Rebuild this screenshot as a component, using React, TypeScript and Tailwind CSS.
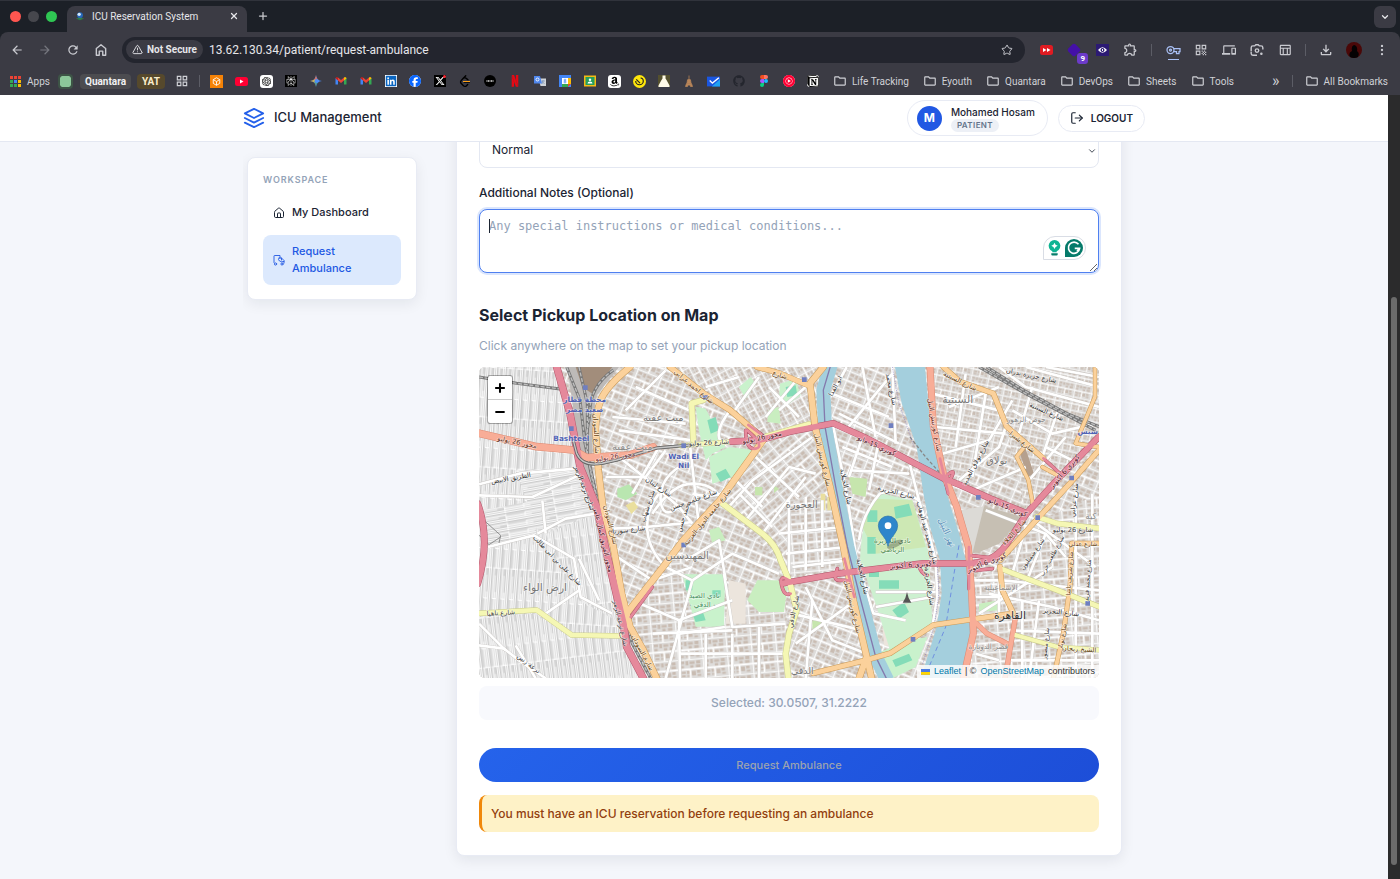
import type { ReactNode } from "react";
import {
  ChevronDown,
  EllipsisVertical,
  House,
  LogOut,
  Plus,
  Star,
  TriangleAlert,
  X,
} from "lucide-react";
import {
  FaAmazon,
  FaFacebook,
  FaGithub,
  FaLinkedin,
  FaXTwitter,
  FaYoutube,
} from "react-icons/fa6";
import { FiLayers } from "react-icons/fi";
import {
  MdArrowBack,
  MdArrowForward,
  MdOutlineDevices,
  MdOutlineExtension,
  MdOutlineFileDownload,
  MdOutlineFolder,
  MdOutlineGridView,
  MdOutlineTableChart,
  MdQrCode,
  MdRefresh,
} from "react-icons/md";
import { RiOpenaiFill } from "react-icons/ri";
import {
  SiLeetcode,
  SiNetflix,
  SiNotion,
  SiPerplexity,
  SiYoutubemusic,
} from "react-icons/si";

function Gmail() {
  return (
    <svg viewBox="0 0 24 24" className="h-3 w-3">
      <path d="M1 6v13h5V9z" fill="#4285f4" />
      <path d="M23 6v13h-5V9z" fill="#34a853" />
      <path d="M6 5l6 5 6-5v6l-6 5-6-5z" fill="#ea4335" />
      <path d="M18 5l2-1q3 0 3 3l-5 4z" fill="#fbbc04" />
      <path d="M6 5L4 4Q1 4 1 7l5 4z" fill="#c5221f" />
    </svg>
  );
}

function Figma() {
  return (
    <svg viewBox="0 0 24 24" className="h-3 w-3">
      <path d="M12 0H8a4 4 0 0 0 0 8h4z" fill="#f24e1e" />
      <path d="M12 0h4a4 4 0 0 1 0 8h-4z" fill="#ff7262" />
      <path d="M12 8H8a4 4 0 0 0 0 8h4z" fill="#a259ff" />
      <circle cx="16" cy="12" r="4" fill="#1abcfe" />
      <path d="M12 16H8a4 4 0 1 0 4 4z" fill="#0acf83" />
    </svg>
  );
}

const favicons: { name: string; icon: ReactNode }[] = [
  {
    name: "Sandbox",
    icon: (
      <svg viewBox="0 0 24 24" className="h-[13px] w-[13px] bg-[#f58206]">
        <path
          d="M12 5l6 3.500v7L12 19l-6-3.500v-7zM6 8.500l6 3.500 6-3.500M12 12v7"
          fill="none"
          stroke="#fff"
          strokeWidth="1.600"
        />
      </svg>
    ),
  },
  {
    name: "YouTube",
    icon: (
      <svg viewBox="0 0 26 18" className="h-[9px] w-[13px]">
        <rect width="26" height="18" rx="5" fill="#ff0033" />
        <path d="M10 5l7 4-7 4z" fill="#fff" />
      </svg>
    ),
  },
  {
    name: "ChatGPT",
    icon: (
      <span className="rounded-[3px] bg-white p-px">
        <RiOpenaiFill className="h-[11px] w-[11px] text-black" />
      </span>
    ),
  },
  {
    name: "Perplexity",
    icon: (
      <span className="bg-black p-px">
        <SiPerplexity className="h-[10px] w-[10px] text-white" />
      </span>
    ),
  },
  {
    name: "Gemini",
    icon: (
      <svg viewBox="0 0 24 24" className="h-3 w-3">
        <path d="M12 0q1 11 12 12Q13 13 12 24z" fill="#4c8df6" />
        <path d="M12 0q-1 11-12 12 11 1 12 12z" fill="#8a9bb0" />
        <path d="M12 0q-.5 8-5 10h10Q12.500 8 12 0z" fill="#e5695b" />
        <path d="M0 12q9-1 11-4v8q-2-3-11-4z" fill="#e0b93a" />
        <path d="M12 24q-.5-8-4-11h8q-3.500 3-4 11z" fill="#4ea36b" />
        <circle cx="13" cy="12" r="4" fill="#4c8df6" />
      </svg>
    ),
  },
  { name: "Gmail", icon: <Gmail /> },
  { name: "Gmail work", icon: <Gmail /> },
  {
    name: "LinkedIn",
    icon: (
      <span className="bg-white">
        <FaLinkedin className="h-3 w-3 text-[#0a66c2]" />
      </span>
    ),
  },
  {
    name: "Facebook",
    icon: (
      <span className="rounded-full bg-white">
        <FaFacebook className="h-3 w-3 text-[#0866ff]" />
      </span>
    ),
  },
  {
    name: "X",
    icon: (
      <span className="relative bg-black p-px">
        <FaXTwitter className="h-[10px] w-[10px] text-white" />
        <i className="absolute top-0 right-0 h-[3px] w-[3px] rounded-full bg-red-500" />
      </span>
    ),
  },
  {
    name: "LeetCode",
    icon: (
      <span className="relative">
        <SiLeetcode className="h-3 w-3 text-black" />
        <i className="absolute top-[6px] left-[4px] h-px w-[7px] bg-[#ffa116]" />
      </span>
    ),
  },
  {
    name: "Chatbox",
    icon: (
      <svg viewBox="0 0 24 24" className="h-3 w-3">
        <circle cx="12" cy="12" r="12" fill="#000" />
        <path d="M5 12h14" stroke="#ddd" strokeWidth="3" strokeDasharray="2 1" />
      </svg>
    ),
  },
  { name: "Netflix", icon: <SiNetflix className="h-3 w-3 text-[#e50914]" /> },
  {
    name: "Translate",
    icon: (
      <svg viewBox="0 0 24 24" className="h-3 w-3">
        <path d="M9 7h15v15H13z" fill="#cfd3d8" />
        <path d="M0 2h12l4 15H0z" fill="#4f86ec" />
        <circle cx="7" cy="9" r="3" fill="none" stroke="#fff" strokeWidth="1.800" />
        <path d="M15 12h7M18 10v2l-2 6M17 13l4 5" stroke="#5b7aa8" fill="none" />
      </svg>
    ),
  },
  {
    name: "Calendar",
    icon: (
      <svg viewBox="0 0 24 24" className="h-3 w-3">
        <path d="M0 0h24v24H0z" fill="#4285f4" />
        <path d="M18 6h6v12h-6z" fill="#fbbc04" />
        <path d="M6 18h12v6H6z" fill="#34a853" />
        <path d="M18 18h6l-6 6z" fill="#ea4335" />
        <path d="M6 6h12v12H6z" fill="#fff" />
        <circle cx="12" cy="10" r="1.800" fill="none" stroke="#4285f4" strokeWidth="1.500" />
        <circle cx="12" cy="14" r="2" fill="none" stroke="#4285f4" strokeWidth="1.500" />
      </svg>
    ),
  },
  {
    name: "Classroom",
    icon: (
      <svg viewBox="0 0 24 24" className="h-3 w-3">
        <path d="M0 1h24v22H0z" fill="#f5ba15" />
        <path d="M3 4h18v16H3z" fill="#249f5c" />
        <circle cx="12" cy="9.500" r="2.500" fill="#fff" />
        <path d="M7 17q0-4 5-4t5 4z" fill="#fff" />
      </svg>
    ),
  },
  {
    name: "Amazon",
    icon: (
      <span className="rounded-[3px] bg-white p-px">
        <FaAmazon className="h-[11px] w-[11px] text-black" />
      </span>
    ),
  },
  {
    name: "Basket",
    icon: (
      <svg viewBox="0 0 24 24" className="h-[13px] w-[13px]">
        <circle cx="12" cy="12" r="12" fill="#ffe70b" />
        <path
          d="M5 11a7 7 0 0 0 14 0c0-4-3-6-5-5M6 8l7 7"
          fill="none"
          stroke="#222"
          strokeWidth="2.200"
        />
      </svg>
    ),
  },
  {
    name: "Lab",
    icon: (
      <svg viewBox="0 0 24 24" className="h-3 w-3 bg-[#54502e]">
        <path d="M9 1h6v6l2 3 6 11v3H1v-3L7 10l2-3z" fill="#fffbe8" />
      </svg>
    ),
  },
  {
    name: "Tower",
    icon: (
      <svg viewBox="0 0 24 24" className="h-3 w-3">
        <path
          d="M12 1v8M9 9h6M9 10h6l1 6H8zM7 17L5 23h4l1-3h4l1 3h4l-2-6z"
          fill="#b98659"
          stroke="#b98659"
          strokeWidth="1.500"
        />
      </svg>
    ),
  },
  {
    name: "Whiteboard",
    icon: (
      <svg viewBox="0 0 24 24" className="h-[13px] w-[13px]">
        <path d="M0 3h24v18H0z" fill="#1a56e0" />
        <path d="M24 8v13H9z" fill="#1fa2f1" />
        <path d="M5 10l5 5L22 5" fill="none" stroke="#fff" strokeWidth="2.500" />
      </svg>
    ),
  },
  { name: "GitHub", icon: <FaGithub className="h-3 w-3 text-[#24262e]" /> },
  { name: "Figma", icon: <Figma /> },
  {
    name: "YouTube Music",
    icon: (
      <span className="rounded-full bg-white">
        <SiYoutubemusic className="h-3 w-3 text-[#ff0033]" />
      </span>
    ),
  },
  {
    name: "Notion",
    icon: (
      <span className="rounded-[3px] bg-white">
        <SiNotion className="h-3 w-3 text-black" />
      </span>
    ),
  },
];

const folders = ["Life Tracking", "Eyouth", "Quantara", "DevOps", "Sheets", "Tools"];

function ToolButton({ label, children }: { label: string; children: ReactNode }) {
  return (
    <button
      aria-label={label}
      className="relative flex h-7 w-7 shrink-0 items-center justify-center"
    >
      {children}
    </button>
  );
}

function TabStrip() {
  return (
    <div className="flex h-8 items-end border-t border-[#30333b] bg-[#1c2027] pl-2.5">
      <div className="flex h-full items-center gap-[7px]">
        <i className="h-[11px] w-[11px] rounded-full bg-[#ff5650]" />
        <i className="h-[11px] w-[11px] rounded-full bg-[#46474d]" />
        <i className="h-[11px] w-[11px] rounded-full bg-[#2fc653]" />
      </div>
      <div className="ml-2.5 flex h-[26px] w-[180px] items-center rounded-t-lg bg-[#3b3b44] px-2 pb-1.5 text-[10px] text-[#e6e6ea]">
        <svg viewBox="0 0 12 12" className="h-2.5 w-2.5">
          <path d="M1 9l5 2 5-2-5-1z" fill="#2f7d4a" />
          <circle cx="6" cy="5" r="3.500" fill="#2668b8" />
          <circle cx="5" cy="4" r="2" fill="#d5e8fa" />
        </svg>
        <span className="ml-[7px] flex-1">ICU Reservation System</span>
        <button aria-label="Close tab">
          <X className="h-2.5 w-2.5" strokeWidth={3} />
        </button>
      </div>
      <button aria-label="New tab" className="mb-2.5 ml-2.5 text-[#c8c9ce]">
        <Plus className="h-3 w-3" strokeWidth={2.5} />
      </button>
      <button
        aria-label="Search tabs"
        className="mr-1 mb-1 ml-auto flex h-[22px] w-[22px] items-center justify-center rounded-md bg-[#3b3b44] text-[#e6e6ea]"
      >
        <ChevronDown className="h-2.5 w-2.5" strokeWidth={3} />
      </button>
    </div>
  );
}

function Toolbar() {
  return (
    <div className="bg-[#1c2027]">
      <div className="flex h-[35px] items-center rounded-t-lg bg-[#3b3b44] pr-1 pl-[3px] text-[#c9cad0]">
        <ToolButton label="Back">
          <MdArrowBack className="h-3.5 w-3.5" />
        </ToolButton>
        <ToolButton label="Forward">
          <MdArrowForward className="h-3.5 w-3.5 text-[#76777f]" />
        </ToolButton>
        <ToolButton label="Reload">
          <MdRefresh className="h-3.5 w-3.5" />
        </ToolButton>
        <ToolButton label="Home">
          <svg
            viewBox="0 0 24 24"
            className="h-3.5 w-3.5"
            fill="none"
            stroke="currentColor"
            strokeWidth="2.400"
            strokeLinejoin="round"
          >
            <path d="M4 21V9.500L12 3l8 6.500V21h-5v-7H9v7z" />
          </svg>
        </ToolButton>
        <div className="mx-[7px] flex h-[26px] min-w-0 flex-1 items-center rounded-full bg-[#23252e] pr-3 pl-1">
          <span className="flex h-[19px] items-center gap-1 rounded-full bg-[#3b3b44] px-1.5 text-[10px] font-bold text-[#e6e6ea]">
            <TriangleAlert className="h-[11px] w-[11px]" />
            Not Secure
          </span>
          <input
            aria-label="Address"
            readOnly
            value="13.62.130.34/patient/request-ambulance"
            className="ml-1.5 min-w-0 flex-1 bg-transparent text-xs text-[#e6e6ea] outline-none"
          />
          <Star className="h-3 w-3" />
        </div>
        <ToolButton label="Playback speed">
          <svg viewBox="0 0 26 20" className="h-2.5 w-[13px]">
            <rect width="26" height="20" rx="5" fill="#e01b22" />
            <path d="M6 6l7 4-7 4zM14 6l7 4-7 4z" fill="#fff" />
          </svg>
        </ToolButton>
        <ToolButton label="Blocker, 9 items">
          <i className="h-2.5 w-2.5 rotate-45 rounded-[2px] bg-[#4410a8]" />
          <span className="absolute right-0 bottom-1 translate-y-1 rounded-[3px] bg-[#6c3bc9] px-[3px] text-[8px] leading-[11px] font-bold text-white">
            9
          </span>
        </ToolButton>
        <ToolButton label="Dark reader">
          <svg viewBox="0 0 26 24" className="h-3 w-[13px]">
            <path d="M0 0h26v24H0z" fill="#2c1a74" />
            <path d="M4 12q9-11 18 0-9 11-18 0z" fill="#fff" />
            <circle cx="13" cy="12" r="4" fill="#2c1a74" />
            <path d="M12 10h2v4h-2z" fill="#fff" />
          </svg>
        </ToolButton>
        <ToolButton label="Extensions">
          <MdOutlineExtension className="h-[15px] w-[15px]" />
        </ToolButton>
        <i className="mx-[7px] h-3 w-px bg-[#5c5d66]" />
        <ToolButton label="Passwords">
          <svg
            viewBox="0 0 30 20"
            className="h-2.5 w-[15px] text-[#a9c0f5]"
            fill="none"
            stroke="currentColor"
            strokeWidth="2.500"
          >
            <circle cx="9" cy="10" r="7" />
            <circle cx="9" cy="10" r="2" />
            <path d="M15 7h13v6h-2v4h-5v-4h-6" />
          </svg>
          <i className="absolute bottom-1 h-px w-[11px] bg-[#a9c0f5]" />
        </ToolButton>
        <ToolButton label="QR code">
          <MdQrCode className="h-3.5 w-3.5" />
        </ToolButton>
        <ToolButton label="Send to device">
          <MdOutlineDevices className="h-3.5 w-3.5" />
        </ToolButton>
        <ToolButton label="Search with lens">
          <svg
            viewBox="0 0 24 24"
            className="h-3.5 w-3.5"
            fill="none"
            stroke="currentColor"
            strokeWidth="2.400"
          >
            <path d="M2 14V8q0-3 3-3h3l2-2h4l2 2h3q3 0 3 3v3M2 15v3q0 3 3 3h7" />
            <circle cx="12" cy="13" r="3" />
            <circle cx="19.500" cy="18.500" r="1" fill="currentColor" />
          </svg>
        </ToolButton>
        <ToolButton label="Table view">
          <MdOutlineTableChart className="h-3.5 w-3.5" />
        </ToolButton>
        <i className="mx-1.5 h-3 w-px bg-[#5c5d66]" />
        <ToolButton label="Downloads">
          <MdOutlineFileDownload className="h-4 w-4" />
        </ToolButton>
        <ToolButton label="Profile">
          <svg viewBox="0 0 16 16" className="h-4 w-4">
            <circle cx="8" cy="8" r="8" fill="#4a0808" />
            <path d="M4 15q-2-4 2-6-1-5 2-6 4 1 3 6 3 2 1 6-4 2-8 0z" fill="#050203" />
          </svg>
        </ToolButton>
        <ToolButton label="Menu">
          <EllipsisVertical className="h-3.5 w-3.5" />
        </ToolButton>
      </div>
    </div>
  );
}

function BookmarkBar() {
  const dots = [
    "#ea4335", "#ea4335", "#ea4335",
    "#34a853", "#4285f4", "#fbbc04",
    "#34a853", "#34a853", "#fbbc04",
  ];
  return (
    <nav className="flex h-7 items-center bg-[#3b3b44] pr-3 pl-2.5 text-[10px] whitespace-nowrap text-[#d0d1d6]">
      <a href="#" className="flex w-[50px] items-center gap-1.5">
        <span className="grid grid-cols-3 gap-px">
          {dots.map((color, i) => (
            <i key={i} className="h-[3px] w-[3px]" style={{ background: color }} />
          ))}
        </span>
        Apps
      </a>
      <a href="#" aria-label="Green" className="h-[11px] w-[11px] rounded-[2px] bg-[#8cc79a] outline-2 outline-[#3d5446]" />
      <a href="#" className="ml-[9px] rounded bg-[#4c4c50] px-[5px] font-bold text-[#f1f1f3]">
        Quantara
      </a>
      <a href="#" className="ml-1.5 rounded bg-[#56492c] px-[5px] font-bold text-[#fbeecb]">
        YAT
      </a>
      <a href="#" aria-label="Board" className="ml-2.5">
        <MdOutlineGridView className="h-3.5 w-3.5" />
      </a>
      <i className="mr-1 ml-2.5 h-3 w-px bg-[#5c5d66]" />
      <div className="grid w-[622px] grid-cols-[repeat(25,minmax(0,1fr))]">
        {favicons.map((f) => (
          <a key={f.name} href="#" aria-label={f.name} className="flex items-center justify-center">
            {f.icon}
          </a>
        ))}
      </div>
      <div className="ml-[7px] flex gap-3.5">
        {folders.map((name) => (
          <a key={name} href="#" className="flex items-center gap-[5px]">
            <MdOutlineFolder className="h-3.5 w-3.5" />
            {name}
          </a>
        ))}
      </div>
      <button aria-label="More bookmarks" className="ml-auto text-base leading-none">
        »
      </button>
      <i className="mx-3 h-3 w-px bg-[#5c5d66]" />
      <a href="#" className="flex items-center gap-[5px]">
        <MdOutlineFolder className="h-3.5 w-3.5" />
        All Bookmarks
      </a>
    </nav>
  );
}

/* ---------- map ---------- */

const majorRoads: { kind: string; w: number; d: string }[] = [
  { kind: "yellow", w: 14, d: "M0 739L173 729 278 804 433 807" },
  { kind: "yellow", w: 16, d: "M723 404L850 500Q890 530 905 580L933 649 953 729 930 800 920 860 928 934" },
  { kind: "yellow", w: 16, d: "M673 99L638 109 643 219" },
  { kind: "yellow", w: 12, d: "M603 236L753 224M853 209L990 170" },
  { kind: "yellow", w: 14, d: "M1673 449L1733 469 1860 484" },
  { kind: "yellow", w: 14, d: "M1563 604L1733 669 1860 719" },
  { kind: "yellow", w: 12, d: "M1608 804L1733 839 1860 849" },
  { kind: "orange", w: 18, d: "M453 0Q380 60 365 100T350 190L358 309 373 429 403 539 428 679 453 779 493 849 533 934" },
  { kind: "orange", w: 16, d: "M573 0L673 79 753 129 853 214" },
  { kind: "orange", w: 14, d: "M833 0L900 18 985 54" },
  { kind: "orange", w: 18, d: "M1033 0L993 49 1008 179 1053 359 1093 539 1123 699 1163 869 1178 934M1163 869L1140 934" },
  { kind: "orange", w: 18, d: "M853 219L723 399 613 519 553 599 443 739" },
  { kind: "orange", w: 14, d: "M1003 919L1163 879 1233 859 1363 774 1603 739 1570 670 1563 599" },
  { kind: "orange", w: 14, d: "M1393 0L1443 44 1543 79 1583 179 1693 274" },
  { kind: "orange", w: 14, d: "M1860 249L1773 349 1663 469 1563 579" },
  { kind: "orange", w: 10, d: "M1663 419L1648 339 1613 269 1640 235M1848 0V89L1790 229 1860 240M1743 329L1690 300" },
  { kind: "orange", w: 12, d: "M1860 529H1778L1773 659 1753 799 1723 934" },
  { kind: "salmon", w: 20, d: "M0 199L173 239 283 249 323 272 453 264 523 240" },
  { kind: "salmon", w: 18, d: "M1353 0L1363 179 1393 319 1433 419 1468 539 1478 679 1483 799 1453 934" },
  { kind: "salmon", w: 13, d: "M1483 760L1523 799 1583 829M1608 759L1578 934" },
  { kind: "pink", w: 20, d: "M233 0L273 139 303 299 353 419 383 559 433 769 443 839 493 934" },
  { kind: "pink", w: 18, d: "M-4 410Q36 520-4 650" },
  { kind: "pink", w: 17, d: "M758 224L843 219 933 194 1063 169 1163 214 1263 266 1393 334 1443 354 1533 394 1643 439" },
  { kind: "pink", w: 17, d: "M913 649L1083 619 1263 597 1333 589 1463 589Q1550 590 1590 520L1643 439 1743 329 1860 209" },
  { kind: "pink", w: 8, d: "M1693 274L1748 324M1383 275L1408 380M1470 540V665M1096 575L1126 690M808 174L855 208M800 190Q800 250 830 245T805 190M930 640Q900 620 908 655T935 680M1393 334Q1430 300 1420 325T1405 340M1075 605Q1060 640 1080 640H1110M1320 595Q1325 620 1345 625M520 660L455 750M1560 575L1470 565M1540 605L1475 612" },
];

const roadFill: Record<string, string> = {
  yellow: "#f5f7b4",
  orange: "#fbd19b",
  salmon: "#f8ad97",
  pink: "#e5899b",
};

const roadEdge: Record<string, string> = {
  yellow: "#c9cb8c",
  orange: "#c99a58",
  salmon: "#dd8a72",
  pink: "#b2566b",
};

const minorRoads = [
  "M0 352L120 320 290 305",
  "M0 385L160 390 310 320",
  "M27 540L165 505 285 575 305 690 400 740",
  "M0 835L75 845 120 880 200 934",
  "M110 835L170 934M0 770L80 850",
  "M175 500L260 455 350 440M190 400L200 500",
  "M300 575L360 700M200 740L300 670",
  "M420 270L520 350 600 420 640 470",
  "M400 485L500 480 603 470 640 465",
  "M540 380Q500 430 505 490T560 600L640 640",
  "M600 300Q540 340 545 400T600 420",
  "M633 234L660 480M640 380Q720 400 750 360",
  "M400 150L620 170M420 190L640 220M470 60L630 130M440 130L560 10",
  "M380 330L500 330 560 250M460 380L540 240",
  "M400 560L520 640M460 700L600 760 760 700M520 640L640 600",
  "M600 760L603 934M520 800L760 790M560 934L640 640",
  "M753 130Q700 200 730 230M760 140L840 30M680 60L780 30",
  "M870 60L960 150M900 130L980 60M860 150L960 30",
  "M723 390Q700 350 640 350T520 440",
  "M740 430L820 340 1000 210M800 460L930 300 1010 320",
  "M850 500L980 330M780 380L880 480M760 330L850 420M830 270L960 390",
  "M900 500L1090 480M920 560L1100 540M940 600L1110 580",
  "M930 400V620M980 390V610M1030 400V600",
  "M640 640L760 560 900 620M620 580L720 520 740 640",
  "M735 620L760 780 920 770M738 780L603 800M603 860H920",
  "M760 800V934M840 780V934M680 800V934",
  "M940 740L1150 790M980 660L1060 820 1163 860M950 830L1130 700M1000 700L980 934",
  "M1103 0L1043 109 1063 179 1103 379 1133 579 1183 739 1280 760",
  "M1060 80L1230 150M1150 0L1190 210M1100 190L1240 20M1080 140L1260 230M1240 0L1250 230",
  "M1090 240L1240 300M1120 310L1290 320M1150 210L1110 330M1200 220L1170 370",
  "M1293 294L1320 400 1345 480 1370 580 1375 690 1360 780",
  "M1203 379Q1260 360 1320 400M1140 520Q1150 440 1203 379",
  "M1190 675H1370M1190 720L1360 690",
  "M1360 80L1560 130M1370 180L1580 200M1390 260L1530 220 1600 100",
  "M1460 20L1430 240M1520 80L1480 330M1410 120L1560 60",
  "M1440 340L1560 240 1580 180M1480 370L1640 300M1520 430L1700 500 1760 570",
  "M1560 0L1640 60 1860 120M1640 0L1860 60M1700 0L1860 30",
  "M1600 130L1720 200 1850 170M1660 60L1620 200M1740 120L1690 270",
  "M1700 240L1780 280M1650 340L1760 210",
  "M1790 349V934M1840 380V934M1700 500L1640 650",
  "M1640 480L1600 620M1660 460L1850 600M1570 640L1860 670",
  "M1530 680L1720 720 1860 760M1490 690H1560M1500 740L1720 600",
  "M1630 700V934M1680 700L1650 934M1590 790L1860 800M1590 880H1860",
  "M1480 640L1560 640V740M1490 860L1560 880",
];

const rails = [
  "M263 0L303 99 318 229 348 379 373 500 400 620 460 830 515 934",
  "M300 0L325 110 325 260 360 420",
  "M0 30L113 49 243 66Q262 70 273 139L293 259Q310 300 370 289L413 279 533 243 633 234",
  "M403 9Q330 60 333 140L318 229",
  "M1523 0L1633 69 1763 139 1860 179",
  "M1500 0L1640 80 1850 190",
];

const parks: { fill: string; d: string }[] = [
  { fill: "#cdf0d0", d: "M1203 379Q1150 420 1143 579L1193 719 1233 850 1360 770 1350 560 1300 400z" },
  { fill: "#cde8b4", d: "M1190 395L1300 400 1340 540 1190 560 1150 480z" },
  { fill: "#c9f2cc", d: "M610 622L738 622 735 779 650 779z" },
  { fill: "#c9eec0", d: "M835 640H895L925 660 915 735 840 735 805 700z" },
  { fill: "#c9f2cc", d: "M650 119L680 125 740 240 700 260 680 280 660 190z" },
  { fill: "#c9f2cc", d: "M690 270L750 240 830 250 760 330 700 350z" },
  { fill: "#c9f2cc", d: "M903 50L950 35 965 85 930 110 900 95z" },
  { fill: "#c9f2cc", d: "M780 60L815 30 830 50 800 95z" },
  { fill: "#b9e6b0", d: "M415 365L450 352 475 380 440 400 415 390z" },
  { fill: "#c9eec0", d: "M868 130L900 120 905 170 865 165z" },
  { fill: "#c6e5ad", d: "M1110 330L1165 335 1160 390 1120 380z" },
  { fill: "#c6e5ad", d: "M1000 760H1025V785H1000zM828 360H850V385H828zM885 355L900 365 885 378z" },
  { fill: "#c9f2cc", d: "M1190 860L1290 820 1345 810 1310 900 1240 934 1210 934z" },
  { fill: "#c9eec0", d: "M690 490L720 480 740 520 700 530zM1500 710L1560 700 1560 730 1500 735z" },
];

const pitches =
  "M685 160L710 150 720 190 695 200zM710 320L740 305 755 330 725 345zM920 60L950 55 955 85 925 90zM620 640H640V670H620zM700 670H725V690H700zM640 740L670 730 680 760 650 765zM1165 430H1195V465H1165zM1245 420L1290 410 1300 445 1250 455zM1165 510H1190V560H1165zM1210 490L1240 480 1245 510 1215 515zM1200 640H1260V665H1200zM1240 730L1275 705 1290 735 1260 755zM1240 880L1290 860 1300 880 1250 900zM1170 600H1200V630H1170z";

const labels: { x: number; y: number; r: number; size: number; fill: string; text: string }[] = [
  { x: 317, y: 105, r: 0, size: 22, fill: "#4f62b5", text: "محطة قطار" },
  { x: 317, y: 134, r: 0, size: 22, fill: "#4f62b5", text: "صعيد مصر" },
  { x: 277, y: 222, r: 0, size: 22, fill: "#4f62b5", text: "Bashteel" },
  { x: 614, y: 275, r: 0, size: 22, fill: "#4f62b5", text: "Wadi El" },
  { x: 614, y: 302, r: 0, size: 22, fill: "#4f62b5", text: "Nil" },
  { x: 1826, y: 200, r: 0, size: 22, fill: "#4f62b5", text: "سيس" },
  { x: 553, y: 162, r: 0, size: 30, fill: "#777", text: "ميت عقبة" },
  { x: 460, y: 250, r: 0, size: 30, fill: "#8a8a8a", text: "ميت عقبة" },
  { x: 198, y: 672, r: 0, size: 32, fill: "#777", text: "ارض الواء" },
  { x: 968, y: 422, r: 0, size: 30, fill: "#777", text: "العجوزة" },
  { x: 624, y: 576, r: 0, size: 30, fill: "#777", text: "المهندسين" },
  { x: 970, y: 922, r: 0, size: 28, fill: "#777", text: "الدقي" },
  { x: 676, y: 693, r: 0, size: 21, fill: "#3f8a5a", text: "نادي الصيد" },
  { x: 670, y: 720, r: 0, size: 21, fill: "#3f8a5a", text: "- الدقي -" },
  { x: 1240, y: 529, r: 0, size: 21, fill: "#4a8a50", text: "نادي الجزيرة" },
  { x: 1240, y: 556, r: 0, size: 21, fill: "#4a8a50", text: "الرياضي" },
  { x: 1436, y: 108, r: 0, size: 32, fill: "#777", text: "السبتية" },
  { x: 1642, y: 166, r: 0, size: 22, fill: "#888", text: "حوض الزهور" },
  { x: 1553, y: 290, r: 0, size: 30, fill: "#777", text: "بولاق" },
  { x: 1593, y: 755, r: 0, size: 32, fill: "#333", text: "القاهرة" },
  { x: 1565, y: 669, r: 0, size: 22, fill: "#888", text: "الإسماعيلية" },
  { x: 1528, y: 847, r: 0, size: 22, fill: "#888", text: "قصر الدوبارة" },
  { x: 1836, y: 455, r: 0, size: 26, fill: "#888", text: "كية" },
  { x: 1396, y: 500, r: 66, size: 26, fill: "#5c8fb8", text: "نهر النيل" },
  { x: 113, y: 232, r: 12, size: 20, fill: "#5a3020", text: "محور 26 يوليو" },
  { x: 410, y: 275, r: -8, size: 20, fill: "#6a2a30", text: "محور 26 يوليو" },
  { x: 690, y: 233, r: -3, size: 20, fill: "#444", text: "شارع 26 يوليو" },
  { x: 850, y: 218, r: -12, size: 20, fill: "#4a1020", text: "محور 26 يوليو" },
  { x: 97, y: 340, r: -10, size: 20, fill: "#333", text: "الطريق الابيض" },
  { x: 230, y: 585, r: 46, size: 20, fill: "#333", text: "شارع على بن ابى طالب" },
  { x: 66, y: 744, r: -3, size: 20, fill: "#444", text: "شارع ناهيا" },
  { x: 145, y: 895, r: 38, size: 20, fill: "#333", text: "ترعة زنين" },
  { x: 310, y: 365, r: 70, size: 20, fill: "#333", text: "شارع ترعة الزمر" },
  { x: 366, y: 520, r: 77, size: 20, fill: "#4a1020", text: "محور الفريق كمال عامر" },
  { x: 388, y: 475, r: 76, size: 20, fill: "#6a4515", text: "شارع السودان" },
  { x: 345, y: 200, r: 87, size: 20, fill: "#6a4515", text: "شارع السودان" },
  { x: 418, y: 770, r: 77, size: 20, fill: "#444", text: "شارع ترعة الزمر" },
  { x: 485, y: 860, r: 62, size: 20, fill: "#6a4515", text: "شارع السودان" },
  { x: 535, y: 365, r: 34, size: 20, fill: "#333", text: "شارع لبنان" },
  { x: 512, y: 420, r: -72, size: 20, fill: "#333", text: "شارع شهاب" },
  { x: 450, y: 495, r: -6, size: 20, fill: "#333", text: "شارع سوريا" },
  { x: 620, y: 450, r: -72, size: 20, fill: "#333", text: "محمد حسن" },
  { x: 645, y: 405, r: -20, size: 20, fill: "#333", text: "شارع حلمي حسن" },
  { x: 690, y: 455, r: -51, size: 20, fill: "#6a4515", text: "شارع جامعة الدول العربية" },
  { x: 640, y: 64, r: 40, size: 20, fill: "#6a4515", text: "شارع احمد عرابي" },
  { x: 900, y: 30, r: 18, size: 20, fill: "#6a4515", text: "شارع" },
  { x: 1024, y: 280, r: 77, size: 20, fill: "#6a4515", text: "شارع كورنيش النيل" },
  { x: 1114, y: 720, r: 77, size: 20, fill: "#6a4515", text: "شارع كورنيش النيل" },
  { x: 1094, y: 360, r: 78, size: 20, fill: "#333", text: "شارع الجبلاية" },
  { x: 1144, y: 630, r: 78, size: 20, fill: "#333", text: "شارع الجبلاية" },
  { x: 950, y: 735, r: -78, size: 20, fill: "#444", text: "شارع الدقي" },
  { x: 1075, y: 60, r: -62, size: 20, fill: "#333", text: "ابو الفدا" },
  { x: 1230, y: 68, r: 78, size: 20, fill: "#333", text: "شارع محمد" },
  { x: 1190, y: 242, r: 24, size: 20, fill: "#4a1020", text: "كوبري 15 مايو" },
  { x: 1584, y: 427, r: 22, size: 20, fill: "#4a1020", text: "كوبري 15 مايو" },
  { x: 1250, y: 382, r: 14, size: 20, fill: "#333", text: "شارع الجزيرة" },
  { x: 1338, y: 500, r: 75, size: 20, fill: "#333", text: "شارع محمد عبد الوهاب" },
  { x: 1345, y: 660, r: 82, size: 20, fill: "#333", text: "شارع الجزيرة" },
  { x: 1296, y: 600, r: -4, size: 20, fill: "#4a1020", text: "كوبري 6 أكتوبر" },
  { x: 1525, y: 593, r: -22, size: 20, fill: "#4a1020", text: "كوبري 6 أكتوبر" },
  { x: 1762, y: 318, r: -49, size: 20, fill: "#4a1020", text: "كوبري 6 أكتوبر" },
  { x: 1360, y: 175, r: 80, size: 20, fill: "#6a2a20", text: "شارع كورنيش النيل" },
  { x: 1440, y: 48, r: 26, size: 20, fill: "#5c3a10", text: "شارع السبتية" },
  { x: 1655, y: 32, r: 12, size: 20, fill: "#333", text: "شارع جزيرة بدران" },
  { x: 1700, y: 140, r: 24, size: 20, fill: "#333", text: "شارع السبتية" },
  { x: 1625, y: 230, r: 38, size: 20, fill: "#5c3a10", text: "شارع شبرا" },
  { x: 1495, y: 290, r: -62, size: 20, fill: "#333", text: "شارع بولاق الجديد" },
  { x: 1610, y: 500, r: -48, size: 20, fill: "#6a4515", text: "شارع الجلاء" },
  { x: 1782, y: 495, r: 0, size: 20, fill: "#444", text: "شارع 26 يوليو" },
  { x: 1792, y: 400, r: -84, size: 20, fill: "#333", text: "شارع عرابي" },
  { x: 1665, y: 565, r: -55, size: 18, fill: "#333", text: "شارع شمبليون" },
  { x: 1724, y: 570, r: -62, size: 18, fill: "#333", text: "شارع طلعت حرب" },
  { x: 1778, y: 620, r: -86, size: 18, fill: "#5c3a10", text: "شارع شريف باشا" },
  { x: 1832, y: 640, r: -86, size: 18, fill: "#333", text: "شارع محمد فريد" },
  { x: 1812, y: 537, r: 0, size: 18, fill: "#5c3a10", text: "شارع عدلي" },
  { x: 1745, y: 742, r: 6, size: 20, fill: "#333", text: "شارع التحرير" },
  { x: 1800, y: 853, r: 4, size: 20, fill: "#5c3a10", text: "الشيخ ريحان" },
  { x: 1706, y: 830, r: -84, size: 18, fill: "#333", text: "شارع منصور" },
  { x: 1756, y: 810, r: -80, size: 18, fill: "#5c3a10", text: "شارع نوبار" },
];

const stations = [
  [319, 62], [277, 185], [614, 236], [679, 92], [976, 38], [1236, 176],
  [614, 534], [1498, 391], [1676, 452], [1778, 333], [1826, 709], [1302, 817],
];

function CityMap() {
  const narrowNile =
    "M1055 -5L1033 69 1038 179 1070 359 1105 539 1145 699 1190 869 1225 940";
  return (
    <svg
      viewBox="0 0 1860 933"
      preserveAspectRatio="xMidYMid slice"
      className="block h-full w-full"
      role="img"
      aria-label="Map of Cairo"
    >
      <defs>
        <pattern id="plots" width="26" height="150" patternUnits="userSpaceOnUse" patternTransform="rotate(4)">
          <path d="M0 0h26v150H0z" fill="#dadada" />
          <path d="M2 0v150M9 0v90M15 20v130M21 0v150M0 148h26M9 90h12" stroke="#fff" strokeWidth="3" />
          <path d="M5 0v150M18 0v70" stroke="#b8b8b8" strokeWidth="2" />
        </pattern>
        <pattern id="plotsB" href="#plots" patternTransform="rotate(-7)" />
        <pattern id="plotsC" href="#plots" patternTransform="rotate(80)" />
        <pattern id="blocks" width="74" height="58" patternUnits="userSpaceOnUse" patternTransform="rotate(22)">
          <path d="M0 0h74v58H0z" fill="#dedcda" />
          <path
            d="M6 6h12v8H6zM22 6h8v12h-8zM34 7h15v8H34zM54 6h12v9H54zM6 19h10v8H6zM35 19h10v8H35zM52 18h14v9H52zM6 36h14v7H6zM24 35h9v9h-9zM38 36h12v14H38zM54 35h10v8H54zM7 47h12v6H7zM24 48h10v5H24zM55 47h11v6H55z"
            fill="#c9bcb2"
          />
          <path d="M0 0h74M0 30h74M0 0v58M34 30v28" stroke="#fff" strokeWidth="5" />
        </pattern>
        <pattern id="blocksB" href="#blocks" patternTransform="rotate(-40)" />
        <pattern id="blocksC" href="#blocks" patternTransform="rotate(-5)" />
        <pattern id="blocksD" href="#blocks" patternTransform="rotate(62) scale(.8)" />
        <pattern id="blocksE" href="#blocks" patternTransform="rotate(12) scale(.7)" />
      </defs>

      <path d="M0 0h1860v933H0z" fill="url(#blocks)" />
      <path d="M0 0H233L303 299 383 559 493 934H0z" fill="url(#plots)" />
      <path d="M110 310L300 300 350 440 180 500z" fill="url(#plotsC)" />
      <path d="M200 500L350 440 430 770 300 700z" fill="url(#plotsB)" />
      <path d="M0 750L170 740 280 810 440 815 490 934H0z" fill="url(#plotsB)" />
      <path d="M0 430L180 400 170 505 20 545z" fill="url(#plotsC)" />
      <path d="M440 745L610 525 620 800 620 934H540z" fill="url(#blocksC)" />
      <path d="M603 700H920V934H603z" fill="url(#blocksC)" />
      <path d="M853 219L1008 190 1093 539 930 620 723 399z" fill="url(#blocksB)" />
      <path d="M560 0H1030L1000 180 853 209z" fill="url(#blocksD)" />
      <path d="M930 400L1053 390 1110 600 930 630z" fill="url(#blocksC)" />
      <path d="M1350 0H1600L1560 240 1440 350 1380 240z" fill="url(#blocksE)" />
      <path d="M1400 0H1860V240L1640 430 1560 90z" fill="url(#blocksE)" />
      <path d="M1563 604L1663 469 1860 380V934H1480V640z" fill="url(#blocksC)" />
      <path d="M265 0H420L350 90 330 420 300 250z" fill="#bdbab8" />
      <path d="M290 0H400L340 80 310 60z" fill="#a28d7b" />
      <path d="M1515 418L1640 452 1560 530 1500 556 1470 560 1445 480z" fill="#c6bfb3" />
      <path d="M1480 560L1445 430 1515 418z" fill="#dcdad6" />
      <path d="M1620 250L1640 245 1665 320 1645 330z" fill="#b5a08e" />
      <path d="M750 640L800 650 800 770 740 770zM1210 780L1240 770 1245 840 1215 835z" fill="#ece5dd" />
      <path d="M1025 380h14v50h-14zM1045 390h10v40h-10zM440 415l25-12 12 18-20 20z" fill="#eadf9e" />
      {parks.map((p) => (
        <path key={p.d} d={p.d} fill={p.fill} />
      ))}
      <path d={pitches} fill="#84dcb8" />

      <g fill="none" strokeLinejoin="round">
        {minorRoads.map((d) => (
          <path key={d} d={d} stroke="#c9c6c3" strokeWidth="10" />
        ))}
        {minorRoads.map((d) => (
          <path key={d} d={d} stroke="#fff" strokeWidth="8" />
        ))}
        <path d={narrowNile} stroke="#a4cfdd" strokeWidth="42" />
      </g>
      <path
        d="M1248 0L1268 109 1313 239 1333 379 1353 479 1383 579 1388 679 1373 779 1338 894 1325 934H1448L1478 799 1478 679 1460 579 1440 499 1403 379 1383 269 1348 109 1338 0z"
        fill="#a4cfdd"
      />
      <g fill="none">
        <path d={narrowNile} stroke="#8479ad" strokeWidth="4" />
        <path d="M1293 210L1340 270 1385 320" stroke="#888" strokeWidth="4" strokeDasharray="10 6" />
        <path d="M1440 535L1425 620 1400 780 1350 900" stroke="#6f8fe0" strokeWidth="3" strokeDasharray="14 10" />
        <path d="M1240 0L1260 109 1305 239M1375 600L1380 679 1365 779 1330 894" stroke="#8b7fc4" strokeWidth="2" strokeDasharray="3 4" />
        {rails.map((d) => (
          <path key={d} d={d} stroke="#777" strokeWidth="9" />
        ))}
        {rails.map((d) => (
          <path key={d} d={d} stroke="#bdbdbd" strokeWidth="4" strokeDasharray="12 5" />
        ))}
        <path d="M15 460L65 505 60 528M-5 500L30 533M30 533L65 510" stroke="#666" strokeWidth="2" />
      </g>
      <g fill="none" strokeLinejoin="round" strokeLinecap="round">
        {majorRoads.map((r) => (
          <path key={r.d} d={r.d} stroke={roadEdge[r.kind]} strokeWidth={r.w + 3} />
        ))}
        {majorRoads.map((r) => (
          <path key={r.d} d={r.d} stroke={roadFill[r.kind]} strokeWidth={r.w} />
        ))}
        <path d="M283 220L293 259Q310 300 370 289L413 279 533 243 633 234" stroke="#666" strokeWidth="9" />
        <path d="M283 220L293 259Q310 300 370 289L413 279 533 243 633 234" stroke="#c6c6c6" strokeWidth="4" />
      </g>
      <path d="M1284 675l5 18 8 14h-26l8-14z" fill="#555" />
      {stations.map(([x, y]) => (
        <path key={`${x}-${y}`} d={`M${x - 7} ${y - 7}h14v14h-14z`} fill="#6f7fc0" />
      ))}

      <g
        fontFamily="'DejaVu Sans', 'Noto Sans', sans-serif"
        textAnchor="middle"
        stroke="#fff"
        strokeOpacity=".5"
        strokeWidth="4"
        paintOrder="stroke"
      >
        {labels.map((l, i) => (
          <text
            key={i}
            fontSize={l.size}
            fontWeight={l.fill === "#4f62b5" ? 700 : 400}
            fill={l.fill}
            transform={`translate(${l.x} ${l.y}) rotate(${l.r})`}
          >
            {l.text}
          </text>
        ))}
      </g>

      <ellipse cx="1248" cy="532" rx="26" ry="9" fill="#000" opacity=".25" transform="rotate(-25 1248 532)" />
      <path
        d="M1227 538Q1222 515 1207 500Q1198 488 1198 476A29 29 0 0 1 1256 476Q1256 488 1247 500Q1232 515 1227 538z"
        fill="#2e86cb"
        stroke="#2a6fa8"
        strokeWidth="2"
      />
      <circle cx="1227" cy="476" r="10" fill="#fff" />
    </svg>
  );
}

function PickupMap() {
  return (
    <div className="relative h-[311px] overflow-hidden rounded-md bg-[#dedcda]">
      <CityMap />
      <div className="absolute top-2 left-2 flex w-[26px] flex-col rounded-[3px] border border-black/30 bg-white bg-clip-padding text-black">
        <button type="button" aria-label="Zoom in" className="flex h-6 items-center justify-center border-b border-[#ccc]">
          <Plus className="h-3.5 w-3.5" strokeWidth={3.5} />
        </button>
        <button type="button" aria-label="Zoom out" className="flex h-[23px] items-center justify-center">
          <svg viewBox="0 0 24 24" className="h-3.5 w-3.5">
            <path d="M4 12h16" stroke="currentColor" strokeWidth="3.500" />
          </svg>
        </button>
      </div>
      <p className="absolute right-0 bottom-0 flex items-center gap-1 bg-white/80 px-1 font-['Liberation_Sans',sans-serif] text-[9px] leading-[13px] text-[#333]">
        <svg viewBox="0 0 12 8" className="h-1.5 w-[9px]">
          <path d="M0 0h12v4H0z" fill="#4c7be1" />
          <path d="M0 4h12v3H0z" fill="#ffd500" />
          <path d="M0 7h12v1H0z" fill="#e0bc00" />
        </svg>
        <a href="#" className="text-[#0078a8]">Leaflet</a>
        <span>| ©</span>
        <a href="#" className="text-[#0078a8]">OpenStreetMap</a>
        <span>contributors</span>
      </p>
    </div>
  );
}

/* ---------- page ---------- */

function Header() {
  return (
    <header className="h-[47px] shrink-0 border-b border-[#e4e8f2] bg-white">
      <div className="mx-auto flex h-full max-w-[902px] items-center">
        <FiLayers className="h-[22px] w-[22px] text-[#2460ea]" />
        <span className="ml-[9px] text-[13px] font-medium text-[#1b2433]">ICU Management</span>
        <div className="ml-auto flex h-9 items-center gap-[9px] rounded-full border border-[#e8ebf4] pr-3 pl-[9px]">
          <span className="flex h-[25px] w-[25px] items-center justify-center rounded-full bg-[#2158e3] text-xs font-bold text-white">
            M
          </span>
          <div className="flex flex-col items-start">
            <span className="text-[10px] leading-[14px] font-medium text-[#1b2433]">Mohamed Hosam</span>
            <span className="rounded-full bg-[#edf0f6] px-1.5 text-[8px] leading-[13px] font-semibold tracking-wider text-[#64748b]">
              PATIENT
            </span>
          </div>
        </div>
        <button className="ml-2.5 flex h-[27px] items-center gap-[7px] rounded-full border border-[#e8ebf4] px-[11px] text-[10px] font-semibold text-[#1b2433]">
          <LogOut className="h-3.5 w-3.5" />
          LOGOUT
        </button>
      </div>
    </header>
  );
}

function Sidebar() {
  return (
    <aside className="mt-[15px] w-[170px] shrink-0 self-start rounded-lg border border-[#e8ebf4] bg-white px-[15px] pt-[15px] pb-3.5 shadow-[0_4px_14px_rgba(15,23,42,0.07)]">
      <h2 className="text-[9px] leading-[13px] font-semibold tracking-widest text-[#94a3b8]">WORKSPACE</h2>
      <nav className="mt-2 text-[11px] leading-[17px] font-medium">
        <a href="#" className="flex items-center gap-[7px] px-2.5 py-2.5 text-[#1b2433]">
          <House className="h-3 w-3" />
          My Dashboard
        </a>
        <a
          href="#"
          className="mt-1 flex items-center gap-[7px] rounded-lg bg-[#dce9fd] px-2.5 py-2 text-[#2158e3]"
        >
          <svg
            viewBox="0 0 24 24"
            className="h-3 w-3 shrink-0"
            fill="none"
            stroke="currentColor"
            strokeWidth="1.800"
            strokeLinecap="round"
            strokeLinejoin="round"
          >
            <path d="M2 17V4q0-1 1-1h11v5" />
            <path d="M12 8h5l5 5v5M12 8q-3 3 1 6t9 1M17 8v4" />
            <circle cx="5" cy="20" r="2.200" />
            <circle cx="18" cy="20" r="2.200" />
          </svg>
          <span>Request Ambulance</span>
        </a>
      </nav>
    </aside>
  );
}

function GrammarBadge() {
  return (
    <div className="absolute right-[13px] bottom-[13px] flex h-6 items-center gap-1 rounded-t-full rounded-br-full border border-[#d9dde5] bg-white pr-0.5 pl-1">
      <svg viewBox="0 0 24 30" className="h-4 w-[13px]">
        <circle cx="12" cy="11" r="11" fill="#0fb493" />
        <path d="M8 20h8v3H8z" fill="#0fb493" />
        <path d="M6 25h12v2q0 2-2 2H8q-2 0-2-2z" fill="#067d6b" />
        <path d="M12 5l2 4 4 2-4 2-2 4-2-4-4-2 4-2z" fill="#fff" />
      </svg>
      <svg viewBox="0 0 24 24" className="h-[18px] w-[18px]">
        <path d="M0 24V12A12 12 0 1 1 12 24z" fill="#057a6a" />
        <path
          d="M18 7A7.500 7.500 0 1 0 19.500 12.500H13M16 16l3.500-3.500"
          fill="none"
          stroke="#fff"
          strokeWidth="2.200"
        />
      </svg>
    </div>
  );
}

function RequestForm() {
  return (
    <form className="rounded-lg border border-[#e8ebf4] bg-white px-[22px] pt-6 pb-[23px] text-[#1b2433] shadow-[0_4px_14px_rgba(15,23,42,0.08)]">
      <div className="relative">
        <select
          aria-label="Priority"
          className="h-9 w-full appearance-none rounded-lg border border-[#e4e8f2] bg-white px-3 text-xs"
        >
          <option>Normal</option>
        </select>
        <ChevronDown className="absolute top-3.5 right-0.5 h-2.5 w-2.5" />
      </div>

      <label htmlFor="notes" className="mt-4 block text-xs leading-[18px] font-medium">
        Additional Notes (Optional)
      </label>
      <div className="relative mt-[7px]">
        <textarea
          id="notes"
          placeholder="Any special instructions or medical conditions..."
          className="block h-16 w-full resize-y rounded-lg border border-[#4f80f0] bg-white px-[9px] py-[7px] font-['DejaVu_Sans_Mono',monospace] text-xs leading-[18px] shadow-[0_0_0_2px_#dbe6fd] outline-none placeholder:text-[#94a3b8]"
        />
        <i className="absolute top-2.5 left-2.5 h-3.5 w-px bg-[#1b2433]" />
        <GrammarBadge />
      </div>

      <h2 className="mt-[30px] text-base leading-6 font-bold">Select Pickup Location on Map</h2>
      <p className="mt-[9px] mb-[11px] text-xs leading-5 text-[#94a3b8]">
        Click anywhere on the map to set your pickup location
      </p>
      <PickupMap />
      <p className="mt-2 rounded-lg bg-[#f8f9fd] text-center text-xs leading-[34px] font-medium text-[#94a3b8]">
        Selected: 30.0507, 31.2222
      </p>

      <button
        type="button"
        disabled
        className="mt-7 h-[34px] w-full rounded-full bg-linear-135 from-[#2563eb] to-[#1d4ed8] text-[11px] font-medium text-[#9ca3af]"
      >
        Request Ambulance
      </button>
      <p className="mt-[13px] rounded-lg border-l-3 border-[#f0880a] bg-[#fef2c7] pl-[9px] text-xs leading-[37px] font-medium text-[#92400e]">
        You must have an ICU reservation before requesting an ambulance
      </p>
    </form>
  );
}

export default function App() {
  return (
    <div className="flex h-screen flex-col overflow-hidden font-['Inter',sans-serif]">
      <div className="font-['Roboto',sans-serif]">
        <TabStrip />
        <Toolbar />
        <BookmarkBar />
      </div>
      <div className="flex min-h-0 flex-1">
        <div className="flex min-w-0 flex-1 flex-col bg-[#f4f6fb]">
          <Header />
          <main className="mx-auto flex min-h-0 w-full max-w-[902px] flex-1 gap-[39px] overflow-hidden pr-[23px] pl-1">
            <Sidebar />
            <div className="flex min-w-0 flex-1 flex-col justify-end pb-[23px]">
              <RequestForm />
            </div>
          </main>
        </div>
        <div className="flex w-3 flex-col items-center justify-end bg-[#2b2b2c] pb-3.5">
          <i className="h-[568px] w-1.5 rounded-full bg-[#6b6b6b]" />
        </div>
      </div>
    </div>
  );
}
